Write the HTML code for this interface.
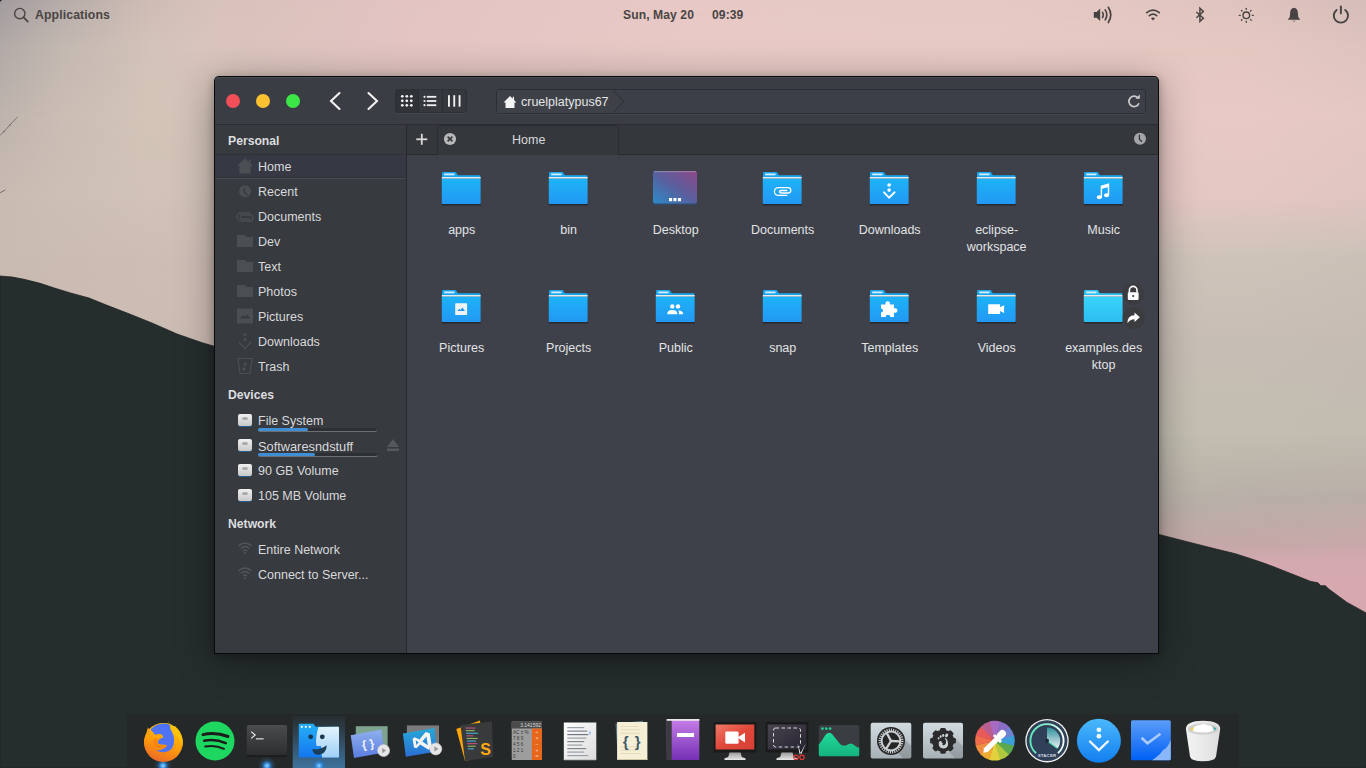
<!DOCTYPE html>
<html><head><meta charset="utf-8">
<style>
*{margin:0;padding:0;box-sizing:border-box}
html,body{width:1366px;height:768px;overflow:hidden;font-family:"Liberation Sans",sans-serif}
body{position:relative;background:#c9bcb4}
.abs{position:absolute}
#wall{position:absolute;left:0;top:0}
.panel-t{position:absolute;font-weight:bold;font-size:12.3px;color:#4a4545;top:8px;letter-spacing:0.1px;line-height:14px}
#win{position:absolute;left:214px;top:76px;width:945px;height:578px;background:#383b40;border:1px solid rgba(5,6,7,0.95);border-radius:5px 5px 0 0;box-shadow:0 6px 38px rgba(0,0,0,0.34),0 2px 8px rgba(0,0,0,0.28)}
#hdr{position:absolute;left:0;top:0;width:945px;height:49px;background:#393c41;border-radius:5px 5px 0 0;border-top:1px solid #4a4d53;border-bottom:1px solid #2a2c30}
.dot{position:absolute;width:14px;height:14px;border-radius:50%;top:17px}
#side{position:absolute;left:1px;top:49px;width:192px;height:528px;background:#383b40;border-right:1px solid #2b2d31}
#tabs{position:absolute;left:193px;top:49px;width:751px;height:29px;background:#323539;border-bottom:1px solid #2a2c30}
#content{position:absolute;left:193px;top:78px;width:751px;height:499px;background:#3d4047}
.st{position:absolute;white-space:nowrap;line-height:15px}
.stxt{position:absolute;font-size:12.5px;color:#d9dadc;white-space:nowrap}
.shdr{position:absolute;font-size:12.5px;font-weight:bold;color:#dcdcde;white-space:nowrap}
.lbl{position:absolute;font-size:12.5px;color:#e2e3e5;white-space:nowrap;text-align:center;width:107px;line-height:17px}
#dock{position:absolute;left:127px;top:714px;width:1112px;height:54px;background:#252828;border-radius:3px 3px 0 0}
</style></head><body>
<svg id="wall" width="1366" height="768" viewBox="0 0 1366 768">
<defs><linearGradient id="vm" x1="0" y1="0" x2="0" y2="1"><stop offset="0" stop-color="#000"/><stop offset="1" stop-color="#fff"/></linearGradient><mask id="m" maskContentUnits="objectBoundingBox"><rect width="1" height="1" fill="url(#vm)"/></mask><linearGradient id="r0"><stop offset="0.000" stop-color="#a29c9e"/><stop offset="0.044" stop-color="#b6aca9"/><stop offset="0.110" stop-color="#cfbdb5"/><stop offset="0.157" stop-color="#d8c2bb"/><stop offset="0.293" stop-color="#e3c4c2"/><stop offset="0.512" stop-color="#e8c9c6"/><stop offset="0.732" stop-color="#e6c9c4"/><stop offset="0.848" stop-color="#e2c6c1"/><stop offset="0.915" stop-color="#dfc4bf"/><stop offset="1.000" stop-color="#d6bdb9"/></linearGradient><linearGradient id="r1"><stop offset="0.000" stop-color="#b2aaa7"/><stop offset="0.044" stop-color="#c3b8b1"/><stop offset="0.110" stop-color="#d3c3b9"/><stop offset="0.157" stop-color="#dac4bc"/><stop offset="0.293" stop-color="#e3c4c2"/><stop offset="0.512" stop-color="#e8c9c5"/><stop offset="0.732" stop-color="#e8cac4"/><stop offset="0.848" stop-color="#e6c8c2"/><stop offset="0.915" stop-color="#e5c7c1"/><stop offset="1.000" stop-color="#dec4bf"/></linearGradient><linearGradient id="r2"><stop offset="0.000" stop-color="#bfb4ae"/><stop offset="0.044" stop-color="#cbbdb4"/><stop offset="0.110" stop-color="#d3c4b8"/><stop offset="0.157" stop-color="#d2c2b8"/><stop offset="0.293" stop-color="#ddc6c0"/><stop offset="0.512" stop-color="#e5c9c4"/><stop offset="0.732" stop-color="#e8c9c5"/><stop offset="0.848" stop-color="#e8c9c5"/><stop offset="0.915" stop-color="#e9c9c5"/><stop offset="1.000" stop-color="#e5c7c3"/></linearGradient><linearGradient id="r3"><stop offset="0.000" stop-color="#c8bbb1"/><stop offset="0.044" stop-color="#cdbfb5"/><stop offset="0.110" stop-color="#d1c2b8"/><stop offset="0.157" stop-color="#cfc0b6"/><stop offset="0.293" stop-color="#d7c4bd"/><stop offset="0.512" stop-color="#ddc6c0"/><stop offset="0.732" stop-color="#e0c6c2"/><stop offset="0.848" stop-color="#e3c7c2"/><stop offset="0.915" stop-color="#e4c7c2"/><stop offset="1.000" stop-color="#dfc5c0"/></linearGradient><linearGradient id="r4"><stop offset="0.000" stop-color="#c8bbb1"/><stop offset="0.044" stop-color="#cbbcb3"/><stop offset="0.110" stop-color="#cebeb5"/><stop offset="0.157" stop-color="#cdbcb4"/><stop offset="0.293" stop-color="#d0c0b9"/><stop offset="0.512" stop-color="#d0c3bb"/><stop offset="0.732" stop-color="#cfc3ba"/><stop offset="0.848" stop-color="#cfc3b9"/><stop offset="0.915" stop-color="#cfc4b9"/><stop offset="1.000" stop-color="#ccc1b7"/></linearGradient><linearGradient id="r5"><stop offset="0.000" stop-color="#c9bab2"/><stop offset="0.044" stop-color="#cbbbb2"/><stop offset="0.110" stop-color="#ccbcb3"/><stop offset="0.157" stop-color="#ccbbb3"/><stop offset="0.293" stop-color="#c8bbb5"/><stop offset="0.512" stop-color="#c8beb5"/><stop offset="0.732" stop-color="#c8beb5"/><stop offset="0.848" stop-color="#c8beb5"/><stop offset="0.915" stop-color="#c8beb5"/><stop offset="1.000" stop-color="#c6bcb4"/></linearGradient><linearGradient id="r6"><stop offset="0.000" stop-color="#c9bab2"/><stop offset="0.044" stop-color="#cbbbb2"/><stop offset="0.110" stop-color="#ccbcb3"/><stop offset="0.157" stop-color="#ccbbb3"/><stop offset="0.293" stop-color="#c8bbb5"/><stop offset="0.512" stop-color="#c4bfb2"/><stop offset="0.732" stop-color="#c2beb0"/><stop offset="0.848" stop-color="#c2beb0"/><stop offset="0.915" stop-color="#c2beb0"/><stop offset="1.000" stop-color="#c1bcb0"/></linearGradient><linearGradient id="r7"><stop offset="0.000" stop-color="#c9bab2"/><stop offset="0.044" stop-color="#cbbbb2"/><stop offset="0.110" stop-color="#ccbcb3"/><stop offset="0.157" stop-color="#ccbbb3"/><stop offset="0.293" stop-color="#c8bbb5"/><stop offset="0.512" stop-color="#bab2a9"/><stop offset="0.732" stop-color="#b8b2a8"/><stop offset="0.848" stop-color="#b8b2a8"/><stop offset="0.915" stop-color="#b8b0a8"/><stop offset="1.000" stop-color="#b9afa8"/></linearGradient><linearGradient id="r8"><stop offset="0.000" stop-color="#c9bab2"/><stop offset="0.044" stop-color="#cbbbb2"/><stop offset="0.110" stop-color="#ccbcb3"/><stop offset="0.157" stop-color="#ccbbb3"/><stop offset="0.293" stop-color="#c8bbb5"/><stop offset="0.512" stop-color="#c2a8a8"/><stop offset="0.732" stop-color="#c2a8a8"/><stop offset="0.848" stop-color="#c2a8a8"/><stop offset="0.915" stop-color="#c4a8a8"/><stop offset="1.000" stop-color="#c8a8aa"/></linearGradient><linearGradient id="r9"><stop offset="0.000" stop-color="#c9bab2"/><stop offset="0.044" stop-color="#cbbbb2"/><stop offset="0.110" stop-color="#ccbcb3"/><stop offset="0.157" stop-color="#ccbbb3"/><stop offset="0.293" stop-color="#c8bbb5"/><stop offset="0.512" stop-color="#d6a9b1"/><stop offset="0.732" stop-color="#d6a9b1"/><stop offset="0.848" stop-color="#d6a9b1"/><stop offset="0.915" stop-color="#d6a9b1"/><stop offset="1.000" stop-color="#d6a9b1"/></linearGradient><linearGradient id="r10"><stop offset="0.000" stop-color="#c9bab2"/><stop offset="0.044" stop-color="#cbbbb2"/><stop offset="0.110" stop-color="#ccbcb3"/><stop offset="0.157" stop-color="#ccbbb3"/><stop offset="0.293" stop-color="#c8bbb5"/><stop offset="0.512" stop-color="#d8a8b0"/><stop offset="0.732" stop-color="#d8a8b0"/><stop offset="0.848" stop-color="#d8a8b0"/><stop offset="0.915" stop-color="#d8a8b0"/><stop offset="1.000" stop-color="#d8a8b0"/></linearGradient></defs><rect y="0" width="1366" height="50" fill="url(#r0)"/><rect y="0" width="1366" height="50" fill="url(#r1)" mask="url(#m)"/><rect y="50" width="1366" height="70" fill="url(#r1)"/><rect y="50" width="1366" height="70" fill="url(#r2)" mask="url(#m)"/><rect y="120" width="1366" height="80" fill="url(#r2)"/><rect y="120" width="1366" height="80" fill="url(#r3)" mask="url(#m)"/><rect y="200" width="1366" height="55" fill="url(#r3)"/><rect y="200" width="1366" height="55" fill="url(#r4)" mask="url(#m)"/><rect y="255" width="1366" height="80" fill="url(#r4)"/><rect y="255" width="1366" height="80" fill="url(#r5)" mask="url(#m)"/><rect y="335" width="1366" height="100" fill="url(#r5)"/><rect y="335" width="1366" height="100" fill="url(#r6)" mask="url(#m)"/><rect y="435" width="1366" height="60" fill="url(#r6)"/><rect y="435" width="1366" height="60" fill="url(#r7)" mask="url(#m)"/><rect y="495" width="1366" height="48" fill="url(#r7)"/><rect y="495" width="1366" height="48" fill="url(#r8)" mask="url(#m)"/><rect y="543" width="1366" height="22" fill="url(#r8)"/><rect y="543" width="1366" height="22" fill="url(#r9)" mask="url(#m)"/><rect y="565" width="1366" height="75" fill="url(#r9)"/><rect y="565" width="1366" height="75" fill="url(#r10)" mask="url(#m)"/><rect y="640" width="1366" height="128" fill="url(#r10)"/>
<path d="M0,276 L12,277 L24,279.3 L40,283.3 L56,288.6 L72,293.4 L89,298 L105,304.5 L129,313.8 L153,323.4 L177,334 L202,342.7 L220,348 L700,450 1150,532.5 L1159,534.5 L1187,541.7 L1211,547.8 L1235.5,553.8 L1251.6,559 L1265,563.5 L1274,566.9 L1292.5,574.2 L1310.7,581.4 L1318,582.8 L1320.7,585.7 L1325.3,585.7 L1329,589.2 L1347,602.4 L1366,612.9 L1366,768 L0,768 Z" fill="#262d2d" stroke="#1f2525" stroke-width="0.8" stroke-linejoin="round"/>
<path d="M0,135.5 L4,131.5 L9,126 L13,121.5 L17.6,117" fill="none" stroke="#75686a" stroke-width="0.9"/><circle cx="4" cy="131.5" r="0.8" fill="#75686a"/><circle cx="10" cy="125" r="0.7" fill="#75686a"/><path d="M0,192.8 L5.3,190" stroke="#75686a" stroke-width="0.9"/><path d="M0,0 L3,0 Q0,0 0,3 Z" fill="#111"/>
</svg>

<!-- top panel -->
<svg class="abs" style="left:12px;top:6px" width="18" height="18" viewBox="0 0 18 18"><circle cx="7.8" cy="7.6" r="5.2" fill="none" stroke="#4a4545" stroke-width="1.4"/><path d="M11.6,11.4 L15.8,15.6" stroke="#4a4545" stroke-width="1.8" stroke-linecap="round"/></svg>
<div class="panel-t" style="left:35px">Applications</div>
<div class="panel-t" style="left:623px;font-size:12.1px">Sun, May 20</div>
<div class="panel-t" style="left:712px;font-size:12.1px">09:39</div>

<svg class="abs" style="left:1080px;top:0px" width="286" height="30" viewBox="1080 0 286 30">
<path d="M1093.8,12 L1096.6,12 L1100.2,8.6 L1100.2,21.1 L1096.6,17.8 L1093.8,17.8 Z" fill="#484343"/>
<g fill="none" stroke="#484343" stroke-width="1.7" stroke-linecap="round">
<path d="M1102.6,12.3 Q1104.1,14.9 1102.6,17.5"/>
<path d="M1105.2,9.9 Q1108.4,14.9 1105.2,19.9"/>
<path d="M1108.3,7.3 Q1113.2,14.9 1108.3,22.5"/>
<path d="M1146.7,12.6 Q1153,7.6 1159.3,12.6"/>
<path d="M1149.3,15.7 Q1153,12.6 1156.7,15.7"/>
</g>
<path d="M1150.9,18.3 Q1153,16.8 1155.1,18.3 L1153,20.6 Z" fill="#484343"/>
<path d="M1196.4,12 L1203.4,18.2 L1199.9,21.4 L1199.9,8.3 L1203.4,11.6 L1196.4,17.8" fill="none" stroke="#484343" stroke-width="1.45" stroke-linejoin="miter"/>
<circle cx="1246.3" cy="15.3" r="3.3" fill="none" stroke="#484343" stroke-width="1.4"/>
<g stroke="#484343" stroke-width="1.3" stroke-linecap="round">
<path d="M1246.3,8.3 L1246.3,9.3"/><path d="M1246.3,21.3 L1246.3,22.3"/><path d="M1239.3,15.3 L1240.3,15.3"/><path d="M1252.3,15.3 L1253.3,15.3"/>
<path d="M1241.4,10.4 L1242,11"/><path d="M1250.6,19.6 L1251.2,20.2"/><path d="M1241.4,20.2 L1242,19.6"/><path d="M1250.6,11 L1251.2,10.4"/>
</g>
<path d="M1294,7.8 Q1297.6,8 1297.9,13 L1298.2,17 L1300.3,19.8 L1287.7,19.8 L1289.8,17 L1290.1,13 Q1290.4,8 1294,7.8 Z" fill="#484343"/>
<path d="M1292.2,20.8 L1295.8,20.8 Q1294,22.4 1292.2,20.8 Z" fill="#484343"/>
<path d="M1336.6,9.9 A7.1,7.1 0 1 0 1345.2,9.9" fill="none" stroke="#484343" stroke-width="1.9" stroke-linecap="round"/>
<path d="M1340.9,6.4 L1340.9,13.4" stroke="#484343" stroke-width="1.9" stroke-linecap="round"/>
</svg>
<div id="win"></div>
<div class="abs" style="left:215px;top:77px;width:943px;height:47px;background:#3a3d43;border-radius:4px 4px 0 0;border-top:1px solid #4a4d53"></div>
<div class="abs" style="left:215px;top:124px;width:943px;height:1px;background:#2a2c30"></div>
<div class="dot" style="left:226px;top:94px;background:#f24f59"></div>
<div class="dot" style="left:256px;top:94px;background:#fbc131"></div>
<div class="dot" style="left:286px;top:94px;background:#3be647"></div>
<svg class="abs" style="left:320px;top:85px" width="70" height="32" viewBox="320 85 70 32"><path d="M339.5,93 L331,101 L339.5,109" fill="none" stroke="#f2f2f2" stroke-width="2.1" stroke-linecap="round" stroke-linejoin="miter"/><path d="M368.5,93 L377,101 L368.5,109" fill="none" stroke="#f2f2f2" stroke-width="2.1" stroke-linecap="round"/></svg>
<div class="abs" style="left:395px;top:89px;width:72px;height:24px;border-radius:3px;border:1px solid #2d3034;background:#35383d;box-shadow:0 1px 0 rgba(255,255,255,0.04)"></div>
<div class="abs" style="left:396px;top:90px;width:22px;height:22px;border-radius:2px 0 0 2px;background:#2f3237"></div>
<div class="abs" style="left:418px;top:90px;width:1px;height:22px;background:#2a2d31"></div>
<div class="abs" style="left:442px;top:90px;width:1px;height:22px;background:#2a2d31"></div>
<svg class="abs" style="left:395px;top:89px" width="72" height="24" viewBox="395 89 72 24" fill="#f0f0f0"><circle cx="402.3" cy="96.3" r="1.4"/><circle cx="406.8" cy="96.3" r="1.4"/><circle cx="411.3" cy="96.3" r="1.4"/><circle cx="402.3" cy="100.8" r="1.4"/><circle cx="406.8" cy="100.8" r="1.4"/><circle cx="411.3" cy="100.8" r="1.4"/><circle cx="402.3" cy="105.3" r="1.4"/><circle cx="406.8" cy="105.3" r="1.4"/><circle cx="411.3" cy="105.3" r="1.4"/><circle cx="424.5" cy="96.8" r="1.1"/><rect x="426.8" y="95.89999999999999" width="9.5" height="1.8"/><circle cx="424.5" cy="101" r="1.1"/><rect x="426.8" y="100.1" width="9.5" height="1.8"/><circle cx="424.5" cy="105.2" r="1.1"/><rect x="426.8" y="104.3" width="9.5" height="1.8"/><rect x="448" y="95.2" width="1.9" height="11.5"/><rect x="453.3" y="95.2" width="1.9" height="11.5"/><rect x="458.6" y="95.2" width="1.9" height="11.5"/></svg>
<div class="abs" style="left:496px;top:89px;width:650px;height:25px;border-radius:3px;border:1px solid #2b2e32;background:#3c3f47;box-shadow:0 1px 0 rgba(255,255,255,0.05)"></div>
<svg class="abs" style="left:497px;top:90px" width="140" height="23" viewBox="497 90 140 23"><path d="M497,90 L613,90 L623.5,101.5 L613,113 L497,113 Z" fill="#3e4147"/><path d="M613,90.5 L623.5,101.5 L613,112.5" fill="none" stroke="#2d3034" stroke-width="1"/><path d="M510,96 L503.5,102.5 L505.5,102.5 L505.5,108 L514.5,108 L514.5,102.5 L516.5,102.5 L514,100 L514,96.8 L512.8,96.8 L512.8,98.8 Z" fill="#f4f4f4"/></svg>
<div class="st" style="left:521px;top:95px;font-size:12.5px;color:#e4e5e7">cruelplatypus67</div>
<svg class="abs" style="left:1125px;top:93px" width="16" height="16" viewBox="1125 93 16 16"><path d="M1138.3,98.2 A5.2,5.2 0 1 0 1139,103.2" fill="none" stroke="#c9cacc" stroke-width="1.7"/><path d="M1135.5,98.8 L1139.8,98.8 L1139.8,94.5 Z" fill="#c9cacc"/></svg>

<div class="abs" style="left:215px;top:125px;width:191px;height:528px;background:#373a3f"></div>
<div class="abs" style="left:406px;top:125px;width:1px;height:528px;background:#26282b"></div>
<div class="abs" style="left:215px;top:154px;width:191px;height:1px;background:#2e3135"></div>
<div class="abs" style="left:215px;top:155px;width:191px;height:22px;background:#363943"></div>
<div class="abs" style="left:215px;top:177px;width:191px;height:1px;background:#303338"></div>
<div class="abs" style="left:215px;top:178px;width:191px;height:1px;background:#46494e"></div>
<div class="abs" style="left:407px;top:125px;width:751px;height:29px;background:#34373b"></div>
<div class="abs" style="left:407px;top:154px;width:751px;height:1px;background:#2a2c30"></div>
<div class="abs" style="left:407px;top:155px;width:751px;height:498px;background:#3e414a"></div>
<svg class="abs" style="left:215px;top:125px" width="191" height="528" viewBox="215 125 191 528" fill="#4b4e53"><path d="M245,158.5 L237,166 L239.5,166 L239.5,173.5 L250.5,173.5 L250.5,166 L253,166 L250.5,163.6 L250.5,159.5 L249,159.5 L249,162.2 Z"/><circle cx="245" cy="191.3" r="6"/><path d="M244.3,187.5 L244.3,192 L247.5,195" stroke="#373a3f" stroke-width="1.2" fill="none"/><path d="M250,213 L241,213 A4,4 0 0 0 241,221 L250,221 A3,3 0 0 0 250,215 L242,215 A2,2 0 0 0 242,219 L250,219" fill="none" stroke="#4b4e53" stroke-width="1.3"/><path d="M237,235 L245,235 L246.5,237 L253,237 L253,247 L237,247 Z"/><path d="M237,260 L245,260 L246.5,262 L253,262 L253,272 L237,272 Z"/><path d="M237,285 L245,285 L246.5,287 L253,287 L253,297 L237,297 Z"/><rect x="237" y="308.5" width="16" height="15" rx="1"/><path d="M240,318.5 L243,315 L245,317 L247,314.5 L250.5,318.5 Z" fill="#373a3f"/><circle cx="245" cy="334.5" r="1.5"/><circle cx="245" cy="339.5" r="1.6"/><path d="M239,342 L245,348.5 L251,342" fill="none" stroke="#4b4e53" stroke-width="1.3"/><path d="M238,358.5 L252,358.5 L250,373.5 L240,373.5 Z" fill="none" stroke="#4b4e53" stroke-width="1.2"/><path d="M245,362 L247,364 L245,366 L243,364 Z"/><rect x="242.5" y="367.5" width="3" height="3"/><path d="M393,439 L399,447 L387,447 Z" fill="#55585c"/><rect x="387" y="448.5" width="12" height="2.5" fill="#55585c"/><g fill="none" stroke="#53565b" stroke-width="1.4"><path d="M238.5,546 Q245,540 251.5,546"/><path d="M240.8,548.5 Q245,544.5 249.2,548.5"/><path d="M243,551 Q245,549 247,551"/></g><circle cx="245" cy="553" r="1.1" fill="#53565b"/><g fill="none" stroke="#53565b" stroke-width="1.4"><path d="M238.5,571 Q245,565 251.5,571"/><path d="M240.8,573.5 Q245,569.5 249.2,573.5"/><path d="M243,576 Q245,574 247,576"/></g><circle cx="245" cy="578" r="1.1" fill="#53565b"/></svg>
<div class="abs" style="left:238px;top:413.5px;width:14px;height:12px;border-radius:2px;background:linear-gradient(#f0f0f0,#c8c8c8);box-shadow:0 1px 0 #2a5d8a"></div><div class="abs" style="left:242px;top:416.5px;width:6px;height:3.5px;border-radius:50%;background:#a9a9a9"></div>
<div class="abs" style="left:238px;top:438.5px;width:14px;height:12px;border-radius:2px;background:linear-gradient(#f0f0f0,#c8c8c8);box-shadow:0 1px 0 #2a5d8a"></div><div class="abs" style="left:242px;top:441.5px;width:6px;height:3.5px;border-radius:50%;background:#a9a9a9"></div>
<div class="abs" style="left:238px;top:463.5px;width:14px;height:12px;border-radius:2px;background:linear-gradient(#f0f0f0,#c8c8c8);box-shadow:0 1px 0 #2a5d8a"></div><div class="abs" style="left:242px;top:466.5px;width:6px;height:3.5px;border-radius:50%;background:#a9a9a9"></div>
<div class="abs" style="left:238px;top:488.5px;width:14px;height:12px;border-radius:2px;background:linear-gradient(#f0f0f0,#c8c8c8);box-shadow:0 1px 0 #2a5d8a"></div><div class="abs" style="left:242px;top:491.5px;width:6px;height:3.5px;border-radius:50%;background:#a9a9a9"></div>
<div class="abs" style="left:258px;top:427.5px;width:119px;height:4px;border-radius:2px;background:#2c2f33;box-shadow:inset 0 -1px 0 #6c6f73"></div><div class="abs" style="left:258px;top:427.5px;width:50px;height:3.5px;border-radius:2px;background:#3f8fd6"></div>
<div class="abs" style="left:258px;top:452.5px;width:120px;height:4px;border-radius:2px;background:#2c2f33;box-shadow:inset 0 -1px 0 #6c6f73"></div><div class="abs" style="left:258px;top:452.5px;width:57px;height:3.5px;border-radius:2px;background:#3f8fd6"></div>
<div class="st" style="left:228px;top:133.8px;font-size:12.2px;font-weight:bold;color:#dcdddf">Personal</div>
<div class="st" style="left:258px;top:160px;font-size:12.5px;color:#d8d9db">Home</div>
<div class="st" style="left:258px;top:185px;font-size:12.5px;color:#d8d9db">Recent</div>
<div class="st" style="left:258px;top:210px;font-size:12.5px;color:#d8d9db">Documents</div>
<div class="st" style="left:258px;top:235px;font-size:12.5px;color:#d8d9db">Dev</div>
<div class="st" style="left:258px;top:260px;font-size:12.5px;color:#d8d9db">Text</div>
<div class="st" style="left:258px;top:285px;font-size:12.5px;color:#d8d9db">Photos</div>
<div class="st" style="left:258px;top:310px;font-size:12.5px;color:#d8d9db">Pictures</div>
<div class="st" style="left:258px;top:335px;font-size:12.5px;color:#d8d9db">Downloads</div>
<div class="st" style="left:258px;top:360px;font-size:12.5px;color:#d8d9db">Trash</div>
<div class="st" style="left:228px;top:387.8px;font-size:12.2px;font-weight:bold;color:#dcdddf">Devices</div>
<div class="st" style="left:258px;top:413.8px;font-size:12.5px;color:#d8d9db">File System</div>
<div class="st" style="left:258px;top:438.8px;font-size:12.8px;color:#d8d9db">Softwaresndstuff</div>
<div class="st" style="left:258px;top:463.8px;font-size:12.5px;color:#d8d9db">90 GB Volume</div>
<div class="st" style="left:258px;top:488.8px;font-size:12.5px;color:#d8d9db">105 MB Volume</div>
<div class="st" style="left:228px;top:516.5px;font-size:12.2px;font-weight:bold;color:#dcdddf">Network</div>
<div class="st" style="left:258px;top:543px;font-size:12.5px;color:#d8d9db">Entire Network</div>
<div class="st" style="left:258px;top:568px;font-size:12.5px;color:#d8d9db">Connect to Server...</div>

<svg class="abs" style="left:414px;top:132px" width="16" height="16" viewBox="414 132 16 16"><rect x="420.9" y="133.8" width="1.8" height="11" fill="#d8d8d8"/><rect x="416.3" y="138.4" width="11" height="1.8" fill="#d8d8d8"/></svg>
<div class="abs" style="left:437px;top:125px;width:182px;height:30px;background:#34373c;border:1px solid #2a2d31;border-bottom:none;border-radius:4px 4px 0 0"></div>
<svg class="abs" style="left:442px;top:131px" width="16" height="16" viewBox="442 131 16 16"><circle cx="450" cy="139" r="6.1" fill="#b8b9bb"/><path d="M447.6,136.6 L452.4,141.4 M452.4,136.6 L447.6,141.4" stroke="#34373c" stroke-width="1.6"/></svg>
<div class="st" style="left:512px;top:133px;font-size:12.5px;color:#d8d9db">Home</div>
<svg class="abs" style="left:1132px;top:131px" width="16" height="16" viewBox="1132 131 16 16"><circle cx="1140" cy="138.8" r="6" fill="#a3a5a8"/><path d="M1139.4,134.8 L1139.4,139.2 L1142,141.8" fill="none" stroke="#34373c" stroke-width="1.3"/></svg>

<svg class="abs" style="left:407px;top:155px" width="751" height="498" viewBox="407 155 751 498"><defs><linearGradient id="fg" x1="0" y1="0" x2="0" y2="1"><stop offset="0" stop-color="#1db3f7"/><stop offset="1" stop-color="#2298f4"/></linearGradient><linearGradient id="fgl" x1="0" y1="0" x2="0" y2="1"><stop offset="0" stop-color="#3bd3fa"/><stop offset="1" stop-color="#2bbdf1"/></linearGradient><linearGradient id="dg" x1="0" y1="1" x2="1" y2="0"><stop offset="0" stop-color="#2b8bc8"/><stop offset="0.5" stop-color="#5a5f9e"/><stop offset="1" stop-color="#8c4888"/></linearGradient></defs><rect x="442" y="204" width="38.8" height="1.6" fill="rgba(0,0,0,0.35)"/><path d="M442,173.2 Q442,172 443.2,172 L455.8,172 L457.8,175.3 L479.6,175.3 Q480.4,175.3 480.4,176.3 L480.4,178 L442,178 Z" fill="#1ba6ee"/><rect x="444.2" y="173.5" width="10.3" height="1.8" fill="#d8eefa"/><rect x="441.8" y="177" width="38.8" height="1.7" fill="#e4ebef"/><path d="M441.8,178.7 L480.6,178.7 L480.6,203 Q480.6,204 479.6,204 L442.8,204 Q441.8,204 441.8,203 Z" fill="url(#fg)"/><rect x="442" y="322" width="38.8" height="1.6" fill="rgba(0,0,0,0.35)"/><path d="M442,291.2 Q442,290 443.2,290 L455.8,290 L457.8,293.3 L479.6,293.3 Q480.4,293.3 480.4,294.3 L480.4,296 L442,296 Z" fill="#1ba6ee"/><rect x="444.2" y="291.5" width="10.3" height="1.8" fill="#d8eefa"/><rect x="441.8" y="295" width="38.8" height="1.7" fill="#e4ebef"/><path d="M441.8,296.7 L480.6,296.7 L480.6,321 Q480.6,322 479.6,322 L442.8,322 Q441.8,322 441.8,321 Z" fill="url(#fg)"/><rect x="455.2" y="303.3" width="11.9" height="11.7" rx="0.6" fill="#eef3f6"/><path d="M457.4,311 L459.3,308.8 L460.4,310 L462.5,307.5 L465,311 Z" fill="#2196f3"/><rect x="549" y="204" width="38.8" height="1.6" fill="rgba(0,0,0,0.35)"/><path d="M549,173.2 Q549,172 550.2,172 L562.8,172 L564.8,175.3 L586.6,175.3 Q587.4,175.3 587.4,176.3 L587.4,178 L549,178 Z" fill="#1ba6ee"/><rect x="551.2" y="173.5" width="10.3" height="1.8" fill="#d8eefa"/><rect x="548.8" y="177" width="38.8" height="1.7" fill="#e4ebef"/><path d="M548.8,178.7 L587.6,178.7 L587.6,203 Q587.6,204 586.6,204 L549.8,204 Q548.8,204 548.8,203 Z" fill="url(#fg)"/><rect x="549" y="322" width="38.8" height="1.6" fill="rgba(0,0,0,0.35)"/><path d="M549,291.2 Q549,290 550.2,290 L562.8,290 L564.8,293.3 L586.6,293.3 Q587.4,293.3 587.4,294.3 L587.4,296 L549,296 Z" fill="#1ba6ee"/><rect x="551.2" y="291.5" width="10.3" height="1.8" fill="#d8eefa"/><rect x="548.8" y="295" width="38.8" height="1.7" fill="#e4ebef"/><path d="M548.8,296.7 L587.6,296.7 L587.6,321 Q587.6,322 586.6,322 L549.8,322 Q548.8,322 548.8,321 Z" fill="url(#fg)"/><rect x="653" y="171" width="44" height="34" rx="2.2" fill="#2f4a6a"/><rect x="653" y="171" width="44" height="32.5" rx="2.2" fill="url(#dg)"/><rect x="654" y="171.2" width="42" height="1" fill="rgba(255,255,255,0.3)"/><rect x="669" y="198" width="3.1" height="3.2" fill="#fff"/><rect x="673.4" y="198" width="3.1" height="3.2" fill="#fff"/><rect x="677.9" y="198" width="3.1" height="3.2" fill="#fff"/><rect x="656" y="322" width="38.8" height="1.6" fill="rgba(0,0,0,0.35)"/><path d="M656,291.2 Q656,290 657.2,290 L669.8,290 L671.8,293.3 L693.6,293.3 Q694.4,293.3 694.4,294.3 L694.4,296 L656,296 Z" fill="#1ba6ee"/><rect x="658.2" y="291.5" width="10.3" height="1.8" fill="#d8eefa"/><rect x="655.8" y="295" width="38.8" height="1.7" fill="#e4ebef"/><path d="M655.8,296.7 L694.6,296.7 L694.6,321 Q694.6,322 693.6,322 L656.8,322 Q655.8,322 655.8,321 Z" fill="url(#fg)"/><circle cx="672.3" cy="306.4" r="2.2" fill="#fff"/><circle cx="678" cy="306.4" r="2.2" fill="#fff"/><path d="M667.2,314.3 Q667.2,310 672.3,310 Q677.4,310 677.4,314.3 Z" fill="#fff"/><path d="M678.4,310.4 Q683.2,310.4 683.2,314.3 L679,314.3 Q679,312 678.4,310.4 Z" fill="#fff"/><rect x="763" y="204" width="38.8" height="1.6" fill="rgba(0,0,0,0.35)"/><path d="M763,173.2 Q763,172 764.2,172 L776.8,172 L778.8,175.3 L800.6,175.3 Q801.4,175.3 801.4,176.3 L801.4,178 L763,178 Z" fill="#1ba6ee"/><rect x="765.2" y="173.5" width="10.3" height="1.8" fill="#d8eefa"/><rect x="762.8" y="177" width="38.8" height="1.7" fill="#e4ebef"/><path d="M762.8,178.7 L801.6,178.7 L801.6,203 Q801.6,204 800.6,204 L763.8,204 Q762.8,204 762.8,203 Z" fill="url(#fg)"/><path d="M786.8,195.3 L778.3,195.3 A3.85,3.85 0 0 1 778.3,187.6 L788.1,187.6 A2.7,2.7 0 0 1 788.1,193 L780.8,193 A1.25,1.25 0 0 1 780.8,190.5 L786.8,190.5" fill="none" stroke="#fff" stroke-width="1.35" stroke-linecap="round"/><rect x="763" y="322" width="38.8" height="1.6" fill="rgba(0,0,0,0.35)"/><path d="M763,291.2 Q763,290 764.2,290 L776.8,290 L778.8,293.3 L800.6,293.3 Q801.4,293.3 801.4,294.3 L801.4,296 L763,296 Z" fill="#1ba6ee"/><rect x="765.2" y="291.5" width="10.3" height="1.8" fill="#d8eefa"/><rect x="762.8" y="295" width="38.8" height="1.7" fill="#e4ebef"/><path d="M762.8,296.7 L801.6,296.7 L801.6,321 Q801.6,322 800.6,322 L763.8,322 Q762.8,322 762.8,321 Z" fill="url(#fg)"/><rect x="870" y="204" width="38.8" height="1.6" fill="rgba(0,0,0,0.35)"/><path d="M870,173.2 Q870,172 871.2,172 L883.8,172 L885.8,175.3 L907.6,175.3 Q908.4,175.3 908.4,176.3 L908.4,178 L870,178 Z" fill="#1ba6ee"/><rect x="872.2" y="173.5" width="10.3" height="1.8" fill="#d8eefa"/><rect x="869.8" y="177" width="38.8" height="1.7" fill="#e4ebef"/><path d="M869.8,178.7 L908.6,178.7 L908.6,203 Q908.6,204 907.6,204 L870.8,204 Q869.8,204 869.8,203 Z" fill="url(#fg)"/><circle cx="889.1" cy="185" r="1.8" fill="#fff"/><circle cx="889.1" cy="190.1" r="1.8" fill="#fff"/><path d="M884,192.3 L889.1,197.6 L894.6,192.3" fill="none" stroke="#fff" stroke-width="1.9" stroke-linecap="round"/><rect x="870" y="322" width="38.8" height="1.6" fill="rgba(0,0,0,0.35)"/><path d="M870,291.2 Q870,290 871.2,290 L883.8,290 L885.8,293.3 L907.6,293.3 Q908.4,293.3 908.4,294.3 L908.4,296 L870,296 Z" fill="#1ba6ee"/><rect x="872.2" y="291.5" width="10.3" height="1.8" fill="#d8eefa"/><rect x="869.8" y="295" width="38.8" height="1.7" fill="#e4ebef"/><path d="M869.8,296.7 L908.6,296.7 L908.6,321 Q908.6,322 907.6,322 L870.8,322 Q869.8,322 869.8,321 Z" fill="url(#fg)"/><path d="M881,304.5 L885.6,304.5 A2.3,2.3 0 1 1 889.8,304.5 L894,304.5 L894,308.5 A2.3,2.3 0 1 1 894,312.5 L894,317 L890.3,317 A2.1,2.1 0 0 0 885.6,317 L881,317 L881,312.6 A1.9,1.9 0 0 0 881,308.6 Z" fill="#fff"/><rect x="977" y="204" width="38.8" height="1.6" fill="rgba(0,0,0,0.35)"/><path d="M977,173.2 Q977,172 978.2,172 L990.8,172 L992.8,175.3 L1014.6,175.3 Q1015.4,175.3 1015.4,176.3 L1015.4,178 L977,178 Z" fill="#1ba6ee"/><rect x="979.2" y="173.5" width="10.3" height="1.8" fill="#d8eefa"/><rect x="976.8" y="177" width="38.8" height="1.7" fill="#e4ebef"/><path d="M976.8,178.7 L1015.6,178.7 L1015.6,203 Q1015.6,204 1014.6,204 L977.8,204 Q976.8,204 976.8,203 Z" fill="url(#fg)"/><rect x="977" y="322" width="38.8" height="1.6" fill="rgba(0,0,0,0.35)"/><path d="M977,291.2 Q977,290 978.2,290 L990.8,290 L992.8,293.3 L1014.6,293.3 Q1015.4,293.3 1015.4,294.3 L1015.4,296 L977,296 Z" fill="#1ba6ee"/><rect x="979.2" y="291.5" width="10.3" height="1.8" fill="#d8eefa"/><rect x="976.8" y="295" width="38.8" height="1.7" fill="#e4ebef"/><path d="M976.8,296.7 L1015.6,296.7 L1015.6,321 Q1015.6,322 1014.6,322 L977.8,322 Q976.8,322 976.8,321 Z" fill="url(#fg)"/><rect x="988.2" y="304.2" width="11.9" height="9.9" rx="0.7" fill="#fff"/><path d="M999.5,307.5 L1004.1,305.3 L1004.1,313 L999.5,310.8 Z" fill="#fff"/><rect x="1084" y="204" width="38.8" height="1.6" fill="rgba(0,0,0,0.35)"/><path d="M1084,173.2 Q1084,172 1085.2,172 L1097.8,172 L1099.8,175.3 L1121.6,175.3 Q1122.4,175.3 1122.4,176.3 L1122.4,178 L1084,178 Z" fill="#1ba6ee"/><rect x="1086.2" y="173.5" width="10.3" height="1.8" fill="#d8eefa"/><rect x="1083.8" y="177" width="38.8" height="1.7" fill="#e4ebef"/><path d="M1083.8,178.7 L1122.6,178.7 L1122.6,203 Q1122.6,204 1121.6,204 L1084.8,204 Q1083.8,204 1083.8,203 Z" fill="url(#fg)"/><path d="M1100.7,185.8 L1109.2,183.2 L1109.2,195.5 L1107.8,195.5 L1107.8,187.2 L1102.1,188.8 L1102.1,197.5 L1100.7,197.5 Z" fill="#fff"/><ellipse cx="1099.3" cy="197.2" rx="2.5" ry="2" fill="#fff"/><ellipse cx="1106.5" cy="195.2" rx="2.5" ry="2" fill="#fff"/><rect x="1084" y="322" width="38.8" height="1.6" fill="rgba(0,0,0,0.35)"/><path d="M1084,291.2 Q1084,290 1085.2,290 L1097.8,290 L1099.8,293.3 L1121.6,293.3 Q1122.4,293.3 1122.4,294.3 L1122.4,296 L1084,296 Z" fill="#2cc3f3"/><rect x="1086.2" y="291.5" width="10.3" height="1.8" fill="#d8eefa"/><rect x="1083.8" y="295" width="38.8" height="1.7" fill="#e4ebef"/><path d="M1083.8,296.7 L1122.6,296.7 L1122.6,321 Q1122.6,322 1121.6,322 L1084.8,322 Q1083.8,322 1083.8,321 Z" fill="url(#fgl)"/><circle cx="1133.2" cy="294" r="10.7" fill="#3b3c3f"/><circle cx="1133.7" cy="318" r="11" fill="#3b3c3f"/><path d="M1129.4,292.6 L1129.4,290.2 A3.8,3.8 0 0 1 1137,290.2 L1137,292.6" fill="none" stroke="#fff" stroke-width="1.6"/><rect x="1127.8" y="292.3" width="10.8" height="7.6" rx="0.8" fill="#fff"/><circle cx="1133.2" cy="296" r="1.1" fill="#3b3c3f"/><path d="M1127.5,323.3 Q1127,315.5 1134.5,315.2 L1134.5,312.5 L1139.8,317.3 L1134.5,322 L1134.5,319.2 Q1130,319.2 1127.5,323.3 Z" fill="#fff"/></svg>
<div class="lbl" style="left:408.2px;top:222.0px">apps</div>
<div class="lbl" style="left:408.2px;top:340.3px">Pictures</div>
<div class="lbl" style="left:515.2px;top:222.0px">bin</div>
<div class="lbl" style="left:515.2px;top:340.3px">Projects</div>
<div class="lbl" style="left:622.2px;top:222.0px">Desktop</div>
<div class="lbl" style="left:622.2px;top:340.3px">Public</div>
<div class="lbl" style="left:729.2px;top:222.0px">Documents</div>
<div class="lbl" style="left:729.2px;top:340.3px">snap</div>
<div class="lbl" style="left:836.2px;top:222.0px">Downloads</div>
<div class="lbl" style="left:836.2px;top:340.3px">Templates</div>
<div class="lbl" style="left:943.2px;top:222.0px">eclipse-<br>workspace</div>
<div class="lbl" style="left:943.2px;top:340.3px">Videos</div>
<div class="lbl" style="left:1050.2px;top:222.0px">Music</div>
<div class="lbl" style="left:1050.2px;top:340.3px">examples.des<br>ktop</div>

<div id="dock"></div>
<svg class="abs" style="left:127px;top:714px" width="1112" height="54" viewBox="127 714 1112 54">
<defs>
<radialGradient id="glow" cx="0.5" cy="0.5" r="0.5"><stop offset="0" stop-color="#9fd4ff"/><stop offset="0.25" stop-color="#3d9cf0"/><stop offset="0.6" stop-color="rgba(40,110,180,0.35)"/><stop offset="1" stop-color="rgba(40,110,180,0)"/></radialGradient>
<linearGradient id="hl" x1="0" y1="0" x2="0" y2="1"><stop offset="0" stop-color="rgba(70,130,180,0.05)"/><stop offset="1" stop-color="rgba(70,140,195,0.75)"/></linearGradient>
<linearGradient id="ffo" x1="0.7" y1="0" x2="0.3" y2="1"><stop offset="0" stop-color="#ffcb05"/><stop offset="0.55" stop-color="#ff9a0a"/><stop offset="1" stop-color="#e8682a"/></linearGradient>
<linearGradient id="term" x1="0" y1="0" x2="0" y2="1"><stop offset="0" stop-color="#4a4c4f"/><stop offset="1" stop-color="#2b2c2e"/></linearGradient>
<linearGradient id="fnl" x1="0" y1="0" x2="0" y2="1"><stop offset="0" stop-color="#25b0f8"/><stop offset="1" stop-color="#1476ee"/></linearGradient>
<linearGradient id="fnr" x1="0" y1="0" x2="0" y2="1"><stop offset="0" stop-color="#e2f3fd"/><stop offset="1" stop-color="#9fd0f7"/></linearGradient>
<linearGradient id="brk" x1="0" y1="0" x2="0" y2="1"><stop offset="0" stop-color="#8fb0ee"/><stop offset="1" stop-color="#5b7de0"/></linearGradient>
<linearGradient id="vsc" x1="0" y1="0" x2="0" y2="1"><stop offset="0" stop-color="#26a8d8"/><stop offset="1" stop-color="#2b6fd3"/></linearGradient>
<linearGradient id="doc" x1="0" y1="0" x2="1" y2="1"><stop offset="0" stop-color="#ffffff"/><stop offset="1" stop-color="#dcdcdc"/></linearGradient>
<linearGradient id="book" x1="0" y1="0" x2="0" y2="1"><stop offset="0" stop-color="#c77ee8"/><stop offset="1" stop-color="#7430b5"/></linearGradient>
<linearGradient id="rec" x1="0" y1="0" x2="1" y2="1"><stop offset="0" stop-color="#f07a68"/><stop offset="0.5" stop-color="#e0483a"/><stop offset="1" stop-color="#d84036"/></linearGradient>
<linearGradient id="stand" x1="0" y1="0" x2="0" y2="1"><stop offset="0" stop-color="#9a9a9a"/><stop offset="1" stop-color="#e8e8e8"/></linearGradient>
<linearGradient id="scr" x1="0" y1="0" x2="1" y2="1"><stop offset="0" stop-color="#4a4550"/><stop offset="1" stop-color="#252230"/></linearGradient>
<linearGradient id="mon" x1="0" y1="0" x2="0" y2="1"><stop offset="0" stop-color="#1fd99a"/><stop offset="1" stop-color="#15b27e"/></linearGradient>
<linearGradient id="set" x1="0" y1="0" x2="0" y2="1"><stop offset="0" stop-color="#d2dbe0"/><stop offset="1" stop-color="#a6b0b5"/></linearGradient>
<linearGradient id="dl" x1="0" y1="0" x2="0" y2="1"><stop offset="0" stop-color="#4ab8fb"/><stop offset="1" stop-color="#127ff0"/></linearGradient>
<linearGradient id="todo" x1="0" y1="0" x2="0" y2="1"><stop offset="0" stop-color="#5b9cf8"/><stop offset="1" stop-color="#0061f5"/></linearGradient>
<linearGradient id="trash" x1="0" y1="0" x2="1" y2="0"><stop offset="0" stop-color="#f2f2f2"/><stop offset="0.5" stop-color="#e9e9e9"/><stop offset="1" stop-color="#dddddd"/></linearGradient>
<linearGradient id="stc" x1="0" y1="0" x2="0" y2="1"><stop offset="0" stop-color="#2f8f9a"/><stop offset="1" stop-color="#e8f0f2"/></linearGradient>
</defs>
<rect x="292.7" y="716" width="52.3" height="52" fill="url(#hl)"/>
<circle cx="163" cy="765.8" r="9" fill="url(#glow)"/>
<circle cx="267" cy="765.8" r="9" fill="url(#glow)"/>
<circle cx="319" cy="765.8" r="9" fill="url(#glow)"/>
<circle cx="163.4" cy="742.4" r="19.5" fill="url(#ffo)"/>
<path d="M150.5,729.5 Q156,723.5 164,723.5 Q168.5,723.8 170,725 Q169.5,729 172.5,733 Q175,739 173.5,745 Q171.5,751 165.5,752 Q160,752.8 156.5,750.5 Q162,750 165.5,747.5 Q167.5,745.5 165,744.5 Q160.5,745 158,743.5 Q157.5,740 160.5,738.5 L163.5,737.5 L162,734.5 Q158,733.5 155.5,735 Z" fill="#4e74f5"/>
<path d="M168,721 L171.5,727 L175.5,726.5 Q183.5,734 182.5,746 Q181,738 175,735 Q171.5,730 168,721 Z" fill="#ffc20a"/>
<path d="M146.2,734.5 L147.8,727.5 L151,731.5 Q147.5,737 148.5,744 Z" fill="#ffa20c"/>
<path d="M152.5,741 Q154.5,737.5 157.5,738.5 Q156.5,743.5 160,745 Q164,746.2 167.5,744.8 Q164,748.8 158.5,748.2 Q153.5,747 152.5,741 Z" fill="#f8860e"/>
<circle cx="215" cy="741" r="19.5" fill="#1ed760"/>
<g fill="none" stroke="#1b1b1b" stroke-linecap="round"><path d="M203,734.6 Q215,731.5 228,736.5" stroke-width="3"/><path d="M204.2,740.8 Q215,738.5 225.8,743.2" stroke-width="2.5"/><path d="M205.2,746.6 Q215,744.6 224,748.8" stroke-width="2"/></g>
<rect x="246.8" y="724.9" width="40.3" height="31.4" rx="2.2" fill="url(#term)"/><rect x="246.8" y="755.3" width="40.3" height="1.4" rx="0.7" fill="rgba(0,0,0,0.4)"/>
<path d="M251.2,731.6 L255.2,735 L251.2,738.4" fill="none" stroke="#eee" stroke-width="1.1"/><rect x="256" y="738.3" width="7.6" height="1.1" fill="#eee"/>
<path d="M298.8,724.5 Q298.8,723.7 299.6,723.7 L313.5,723.7 L315.5,726.8 L338.2,726.8 Q339,726.8 339,727.6 L339,756.7 Q339,757.5 338.2,757.5 L299.6,757.5 Q298.8,757.5 298.8,756.7 Z" fill="url(#fnl)"/>
<path d="M318.5,727 L338.2,726.8 Q339,726.8 339,727.6 L339,756.7 Q339,757.5 338.2,757.5 L322,757.5 L321,746 L316.5,746 Q315,738 318.5,727 Z" fill="url(#fnr)"/>
<circle cx="301.8" cy="726.8" r="1.1" fill="#fff"/><circle cx="305.8" cy="726.8" r="1.1" fill="#fff"/><circle cx="309.8" cy="726.8" r="1.1" fill="#fff"/>
<circle cx="310.7" cy="736.8" r="2.4" fill="#17364f"/><circle cx="322.3" cy="736.8" r="2.4" fill="#17364f"/>
<path d="M312.2,749.2 Q313.5,755.8 320,754.6 Q326.2,753.2 326.8,745.2 Q320.5,750.2 312.2,749.2 Z" fill="#1c3d57"/>
<rect x="355.8" y="726.2" width="31.8" height="20" fill="#7ea38f"/>
<path d="M350.7,735.2 L381.3,729.6 L384.6,752.4 L354,758 Z" fill="url(#brk)"/>
<text x="368" y="748" font-size="11.5" font-weight="bold" fill="#f4f6ff" font-family="Liberation Sans" text-anchor="middle" transform="rotate(-9 368 744)">{ }</text>
<circle cx="383.6" cy="750.6" r="6" fill="#e6e6e6" stroke="#cfcfcf" stroke-width="0.6"/><path d="M382.2,748 L386.2,750.6 L382.2,753.2 Z" fill="#9a9a9a"/>
<rect x="406.9" y="725.4" width="32.1" height="20" fill="#7b7b7b"/>
<path d="M402.9,733.5 L434.4,727.9 L437.2,751.6 L405.8,756.8 Z" fill="url(#vsc)"/>
<g transform="rotate(-9 420 742)"><path d="M427.2,733 L431,734.8 L431,749.2 L427.2,751 L419.8,744.6 L415.6,747.6 L413.2,746.4 L413.2,737.6 L415.6,736.4 L419.8,739.4 Z M416,739.6 L416,744.4 L418.6,742 Z M427.2,737.6 L422.4,742 L427.2,746.4 Z" fill="#f4f4f4" fill-rule="evenodd"/></g>
<circle cx="435.8" cy="748.9" r="6" fill="#e6e6e6" stroke="#cfcfcf" stroke-width="0.6"/><path d="M434.4,746.3 L438.4,748.9 L434.4,751.5 Z" fill="#9a9a9a"/>
<path d="M456.3,729 L480,720.5 L484,756 L465,761 Z" fill="#ffa50a"/>
<path d="M460.5,725 L492,721.5 L493,757 L465,761 Z" fill="#393a3c"/>
<rect x="465.5" y="727.5" width="10" height="1.1" fill="#e05a8a" opacity="0.85"/>
<rect x="465.8" y="730.1" width="9" height="1.1" fill="#9ccc65" opacity="0.85"/>
<rect x="466.1" y="732.7" width="12" height="1.1" fill="#4fc3f7" opacity="0.85"/>
<rect x="466.4" y="735.3" width="7" height="1.1" fill="#e05a8a" opacity="0.85"/>
<rect x="466.7" y="737.9" width="11" height="1.1" fill="#9ccc65" opacity="0.85"/>
<rect x="467.0" y="740.5" width="9" height="1.1" fill="#4fc3f7" opacity="0.85"/>
<rect x="467.3" y="743.1" width="10" height="1.1" fill="#e05a8a" opacity="0.85"/>
<rect x="467.6" y="745.7" width="8" height="1.1" fill="#9ccc65" opacity="0.85"/>
<rect x="467.9" y="748.3" width="6" height="1.1" fill="#4fc3f7" opacity="0.85"/>
<text x="485.5" y="755" font-size="16" font-weight="bold" fill="#ffaa10" font-family="Liberation Sans" text-anchor="middle">S</text>
<rect x="511.7" y="721.4" width="30.2" height="38.6" rx="1" fill="#9d9d9d"/><rect x="511.7" y="721.4" width="30.2" height="7.1" fill="#4b4b4b"/><rect x="531.9" y="728.5" width="10" height="31.5" fill="#e8661a"/>
<text x="541" y="727.3" font-size="5" fill="#ddd" font-family="Liberation Sans" text-anchor="end">3.141592</text>
<text x="513" y="733.5" font-size="4.6" fill="#3a3a3a" font-family="Liberation Sans">AC ± %</text>
<text x="513" y="739.5" font-size="4.6" fill="#3a3a3a" font-family="Liberation Sans">7 8 9</text>
<text x="513" y="745.5" font-size="4.6" fill="#3a3a3a" font-family="Liberation Sans">4 5 6</text>
<text x="513" y="751.5" font-size="4.6" fill="#3a3a3a" font-family="Liberation Sans">1 2 1</text>
<text x="513" y="757.5" font-size="4.6" fill="#3a3a3a" font-family="Liberation Sans">0</text>
<text x="537" y="734" font-size="6" fill="#f5c9a8" font-family="Liberation Sans" text-anchor="middle">÷</text>
<text x="537" y="740" font-size="6" fill="#f5c9a8" font-family="Liberation Sans" text-anchor="middle">×</text>
<text x="537" y="746" font-size="6" fill="#f5c9a8" font-family="Liberation Sans" text-anchor="middle">−</text>
<text x="537" y="752" font-size="6" fill="#f5c9a8" font-family="Liberation Sans" text-anchor="middle">+</text>
<text x="537" y="758" font-size="6" fill="#f5c9a8" font-family="Liberation Sans" text-anchor="middle">=</text>
<rect x="563.8" y="722.5" width="32.5" height="37.5" fill="url(#doc)"/><rect x="563.8" y="759.5" width="32.5" height="0.8" fill="#aaa"/>
<rect x="567.3" y="727.0" width="17" height="1.2" fill="#9aa0a6"/>
<rect x="567.3" y="730.5" width="20" height="1.2" fill="#7f8790"/>
<rect x="567.3" y="734.0" width="21" height="1.2" fill="#6f7780"/>
<rect x="567.3" y="737.5" width="19" height="1.2" fill="#9aa0a6"/>
<rect x="567.3" y="741.0" width="17" height="1.2" fill="#7f8790"/>
<rect x="567.3" y="744.5" width="15" height="1.2" fill="#9aa0a6"/>
<rect x="567.3" y="748.0" width="19" height="1.2" fill="#7f8790"/>
<rect x="567.3" y="751.5" width="17" height="1.2" fill="#9aa0a6"/>
<rect x="567.3" y="755.0" width="21" height="1.2" fill="#9aa0a6"/>
<rect x="589.5" y="731.5" width="1" height="3" fill="#5aa0ff"/>
<path d="M615.5,723.5 L643,720.8 L645,758 L618,760 Z" fill="#587585"/>
<rect x="617.1" y="722" width="30.3" height="38" fill="#f6eed5"/><rect x="617.1" y="759" width="30.3" height="1" fill="#cfc6a6"/>
<rect x="620.5" y="726.0" width="18" height="0.8" fill="#e2d8b8"/>
<rect x="620.5" y="729.4" width="19" height="0.8" fill="#e2d8b8"/>
<rect x="620.5" y="732.8" width="20" height="0.8" fill="#e2d8b8"/>
<rect x="620.5" y="746.4" width="18" height="0.8" fill="#e2d8b8"/>
<rect x="620.5" y="749.8" width="19" height="0.8" fill="#e2d8b8"/>
<rect x="620.5" y="753.2" width="20" height="0.8" fill="#e2d8b8"/>
<text x="632.2" y="746.5" font-size="15" fill="#3f5b6b" font-family="Liberation Sans" font-weight="bold" text-anchor="middle" letter-spacing="1">{ }</text>
<rect x="666.7" y="719" width="32.6" height="41" fill="url(#book)"/><rect x="666.7" y="719" width="5" height="41" fill="#3d3b40"/><rect x="666.7" y="719" width="32.6" height="1.8" fill="#e8e8e8"/>
<rect x="677" y="733" width="17" height="4" fill="#fff"/>
<rect x="713.6" y="722" width="42.7" height="30.4" rx="1.2" fill="#1a1a1a"/><rect x="715.6" y="724.5" width="38.7" height="25" fill="url(#rec)"/>
<path d="M729.5,752.4 L740.5,752.4 L741.8,757 L745.5,758.3 L745.5,760 L724.5,760 L724.5,758.3 L728.2,757 Z" fill="url(#stand)"/>
<rect x="725.3" y="731.5" width="13.3" height="12.2" rx="1.2" fill="#fff"/><path d="M737.5,737.6 L745,732.8 L745,742.4 Z" fill="#fff"/>
<rect x="765.7" y="722" width="42.7" height="30.4" rx="1.2" fill="#1a1a1a"/><rect x="767.7" y="724.5" width="38.7" height="25" fill="url(#scr)"/>
<path d="M781.5,752.4 L792.5,752.4 L793.8,757 L797.5,758.3 L797.5,760 L776.5,760 L776.5,758.3 L780.2,757 Z" fill="url(#stand)"/>
<rect x="773.5" y="728" width="27" height="19" rx="2" fill="none" stroke="#d8d8d8" stroke-width="1" stroke-dasharray="3.5 2.5"/>
<path d="M797.5,743 L799.8,755 L801.2,755 Z M806,743 L800.8,755 L799.4,755 Z" fill="#f4f4f4"/><circle cx="796" cy="757.3" r="2.2" fill="none" stroke="#e03a3a" stroke-width="1.2"/><circle cx="802" cy="757.3" r="2.2" fill="none" stroke="#e03a3a" stroke-width="1.2"/>
<rect x="818.8" y="724.9" width="40.4" height="31.4" rx="1.5" fill="#3a3d42"/>
<path d="M818.8,744.5 Q822,741 825,735.5 Q828,731 832,734 Q836,739 840,744 Q843,747 847,745 Q851,742 854,745 Q857,748 859.2,747.3 L859.2,754.8 Q859.2,756.3 857.7,756.3 L820.3,756.3 Q818.8,756.3 818.8,754.8 Z" fill="url(#mon)"/>
<circle cx="822.5" cy="728.6" r="1.3" fill="#1ed696"/><circle cx="826.3" cy="728.6" r="1.3" fill="#1ed696"/><circle cx="830.1" cy="728.6" r="1.3" fill="#1ed696"/>
<rect x="870.7" y="722.8" width="40.6" height="35.8" rx="2" fill="url(#set)"/>
<path d="M898,753 L903.5,758.6 L909.3,758.6 Q911.3,758.6 911.3,756.6 L911.3,746 L902,736 Z" fill="rgba(0,0,0,0.14)"/>
<circle cx="891" cy="741" r="14" fill="#262626"/>
<circle cx="891" cy="741" r="11.3" fill="none" stroke="#c9ced2" stroke-width="2.4" stroke-dasharray="1.1 1.1"/>
<circle cx="891" cy="741" r="9.4" fill="none" stroke="#c9ced2" stroke-width="2"/>
<path d="M891,741 L886.54,732.61" stroke="#c9ced2" stroke-width="2.3"/>
<path d="M891,741 L900.49,741.33" stroke="#c9ced2" stroke-width="2.3"/>
<path d="M891,741 L885.97,749.06" stroke="#c9ced2" stroke-width="2.3"/>
<rect x="923" y="722.8" width="40" height="35.8" rx="2" fill="url(#set)"/>
<path d="M950,753 L955.5,758.6 L961,758.6 Q963,758.6 963,756.6 L963,746 L953,736 Z" fill="rgba(0,0,0,0.12)"/>
<circle cx="943" cy="740.8" r="11" fill="#2b2b2d"/>
<rect x="940.2" y="727.9" width="5.6" height="5" rx="1.4" fill="#2b2b2d" transform="rotate(0 943 740.8)"/>
<rect x="940.2" y="727.9" width="5.6" height="5" rx="1.4" fill="#2b2b2d" transform="rotate(45 943 740.8)"/>
<rect x="940.2" y="727.9" width="5.6" height="5" rx="1.4" fill="#2b2b2d" transform="rotate(90 943 740.8)"/>
<rect x="940.2" y="727.9" width="5.6" height="5" rx="1.4" fill="#2b2b2d" transform="rotate(135 943 740.8)"/>
<rect x="940.2" y="727.9" width="5.6" height="5" rx="1.4" fill="#2b2b2d" transform="rotate(180 943 740.8)"/>
<rect x="940.2" y="727.9" width="5.6" height="5" rx="1.4" fill="#2b2b2d" transform="rotate(225 943 740.8)"/>
<rect x="940.2" y="727.9" width="5.6" height="5" rx="1.4" fill="#2b2b2d" transform="rotate(270 943 740.8)"/>
<rect x="940.2" y="727.9" width="5.6" height="5" rx="1.4" fill="#2b2b2d" transform="rotate(315 943 740.8)"/>
<path d="M938.8,742.2 Q938.2,748.6 943.8,748.4 Q948.8,748 948,742.5 Q947.3,738.6 944.6,737.8 Q946.6,740.4 945.8,743.6 Q944.8,745.8 942.8,745 Q941.6,744.2 943,743.2 Q941.2,743.2 941.6,741.4 Q940.2,740.4 938.8,742.2 Z" fill="#c9d0d4"/>
<ellipse cx="938.6" cy="738.4" rx="0.9" ry="1.1" fill="#c9d0d4"/><ellipse cx="940.7" cy="736.6" rx="1" ry="1.3" fill="#c9d0d4"/><ellipse cx="943.2" cy="735.5" rx="1.1" ry="1.4" fill="#c9d0d4"/><ellipse cx="946.6" cy="735.4" rx="1.5" ry="1.9" fill="#c9d0d4" transform="rotate(35 946.6 735.4)"/>
<path d="M994.9,740.7 L989.75,721.48 A19.9,19.9 0 0 1 1000.72,721.67 Z" fill="#a66bc0"/>
<path d="M994.9,740.7 L1000.05,721.48 A19.9,19.9 0 0 1 1009.45,727.13 Z" fill="#8a6ec6"/>
<path d="M994.9,740.7 L1008.97,726.63 A19.9,19.9 0 0 1 1014.29,736.22 Z" fill="#6f82d2"/>
<path d="M994.9,740.7 L1014.12,735.55 A19.9,19.9 0 0 1 1013.93,746.52 Z" fill="#3b9fd8"/>
<path d="M994.9,740.7 L1014.12,745.85 A19.9,19.9 0 0 1 1008.47,755.25 Z" fill="#5aa850"/>
<path d="M994.9,740.7 L1008.97,754.77 A19.9,19.9 0 0 1 999.38,760.09 Z" fill="#b0c840"/>
<path d="M994.9,740.7 L1000.05,759.92 A19.9,19.9 0 0 1 989.08,759.73 Z" fill="#e2d03e"/>
<path d="M994.9,740.7 L989.75,759.92 A19.9,19.9 0 0 1 980.35,754.27 Z" fill="#eeab32"/>
<path d="M994.9,740.7 L980.83,754.77 A19.9,19.9 0 0 1 975.51,745.18 Z" fill="#ef8e40"/>
<path d="M994.9,740.7 L975.68,745.85 A19.9,19.9 0 0 1 975.87,734.88 Z" fill="#ef6d4a"/>
<path d="M994.9,740.7 L975.68,735.55 A19.9,19.9 0 0 1 981.33,726.15 Z" fill="#e85a5a"/>
<path d="M994.9,740.7 L980.83,726.63 A19.9,19.9 0 0 1 990.42,721.31 Z" fill="#b85f90"/>
<path d="M994.9,740.7 L989.7495010024599,721.4780760568476 A19.9,19.9 0 0 1 993.8585144707654,720.827272258384 Z" fill="#a66bc0"/>
<g transform="translate(995,741) rotate(-45)" fill="#fff"><path d="M-16.5,0 L-13,-2.6 L2.5,-2.6 L2.5,2.6 L-13,2.6 Z"/><rect x="2" y="-5.2" width="3" height="10.4" rx="1.2"/><rect x="4" y="-3.6" width="10" height="7.2" rx="3.4"/></g>
<defs><linearGradient id="sarc" x1="0" y1="0" x2="1" y2="0"><stop offset="0" stop-color="#5ae6b6"/><stop offset="0.5" stop-color="#8ff0cf"/><stop offset="1" stop-color="#f2fbf8"/></linearGradient></defs>
<circle cx="1047" cy="740.7" r="21.7" fill="#f0f0f0"/><circle cx="1047" cy="740.7" r="20.4" fill="#2f4058"/>
<path d="M1036.11,753.23 A16.6,16.6 0 1 1 1057.89,753.23" fill="none" stroke="url(#sarc)" stroke-width="1.9"/>
<path d="M1047,740.7 L1047.00,727.50 A13.2,13.2 0 0 1 1057.81,748.27 Z" fill="url(#stc)"/>
<path d="M1047,740.7 L1057.22,748.40" stroke="#52e0b4" stroke-width="1.1"/><circle cx="1047" cy="740.7" r="2" fill="#1c2836"/>
<text x="1047" y="756.8" font-size="4.3" font-weight="bold" fill="#d8dde2" font-family="Liberation Sans" text-anchor="middle" letter-spacing="0.2">STACER</text>
<circle cx="1098.9" cy="740.7" r="22" fill="url(#dl)"/><circle cx="1098.9" cy="729.8" r="2.4" fill="#f0f8ff"/><circle cx="1098.9" cy="736.2" r="2.4" fill="#f0f8ff"/>
<path d="M1090,741.5 L1098.9,750 L1107.8,741.5" fill="none" stroke="#f0f8ff" stroke-width="2.4" stroke-linecap="round"/>
<rect x="1131" y="720.3" width="39.8" height="40" rx="1.5" fill="url(#todo)"/>
<path d="M1152,760.3 Q1160,755 1163,750 Q1167,749 1170.8,740 L1170.8,758.8 Q1170.8,760.3 1169.3,760.3 Z" fill="#8ab6fb"/>
<path d="M1141.5,737.7 L1147.5,743.3 L1160.5,733.8" fill="none" stroke="#a8cbfb" stroke-width="2.6"/>
<path d="M1185.9,729 Q1186,721 1203,720.8 Q1220.2,721 1220.2,729 L1216,756.5 Q1215,761.2 1203,761.2 Q1191,761.2 1190,756.5 Z" fill="url(#trash)"/>
<ellipse cx="1203" cy="729" rx="15.3" ry="5.8" fill="#cfcfcf"/><path d="M1192,731 Q1194,724.5 1200,725 Q1204,723 1208,725.5 Q1212,724.5 1213,731 Q1203,734 1192,731 Z" fill="#fff"/>
<path d="M1190,729.5 L1193,726.5 L1193.5,731 Z" fill="#f2d048"/><path d="M1213.5,726.5 L1216,728.5 L1214.8,731 Z" fill="#1aa3a3"/>
</svg>
</body></html>
